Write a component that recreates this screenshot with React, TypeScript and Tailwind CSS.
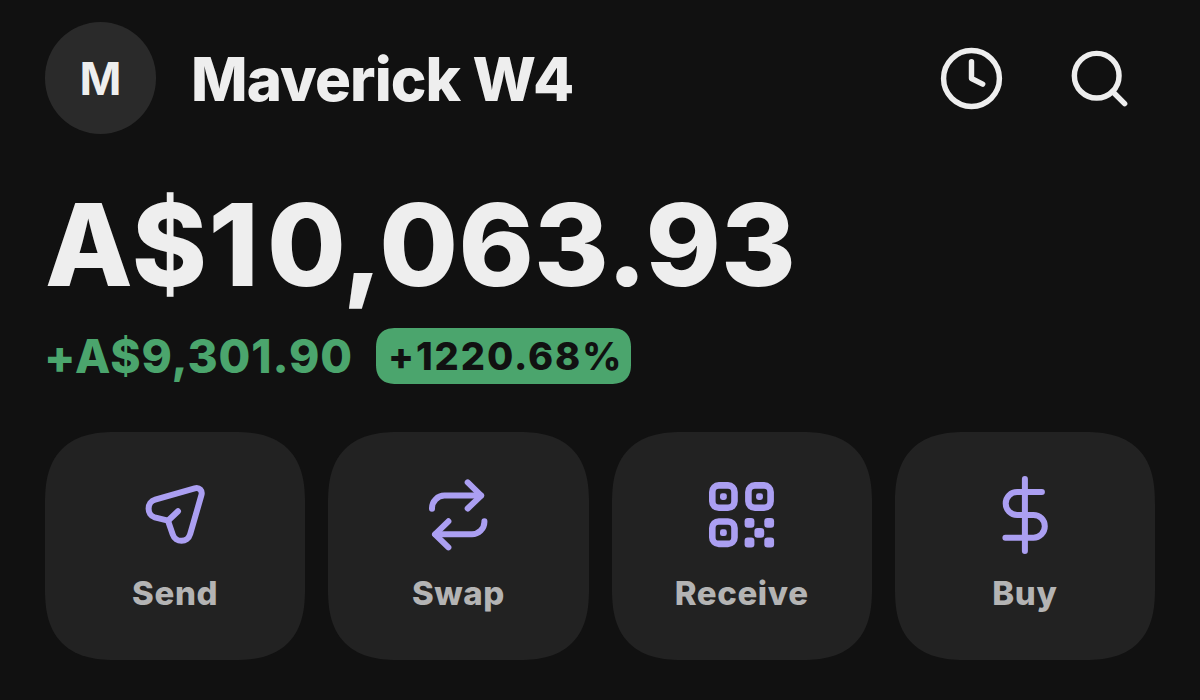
import React from 'react';
import { Clock, Search } from 'lucide-react';

const SendIcon: React.FC = () => (
  <svg viewBox="-4.7 -5 100 100" className="w-[100px] h-[100px]" fill="none" stroke="currentColor" strokeWidth="6" strokeLinecap="round" strokeLinejoin="round">
    <path d="M38.3 50.7L25 47.3C16.8 45 16.8 32 25.5 29.6L65 18.3C69.8 17 73 20.8 71.7 25.2L60.5 64C58 73 45.8 73 43 64.3Z" />
    <path d="M38.3 50.7L48.3 41.2" />
  </svg>
);

const SwapIcon: React.FC = () => (
  <svg viewBox="-1.4 0 100 100" className="w-[100px] h-[100px]" fill="none" stroke="currentColor" strokeWidth="6" strokeLinecap="round" strokeLinejoin="round">
    <path d="M22.6 43.7V43A12.5 12.5 0 0 1 35 30.6H71.5" />
    <path d="M58.3 17.4L71.8 30.6L58.3 43.5" />
    <path d="M75 56.3V57A12.5 12.5 0 0 1 62.5 69.3H26" />
    <path d="M39 56.3L25.6 69.3L39 82.3" />
  </svg>
);

const QrIcon: React.FC = () => (
  <svg viewBox="2 0 100 100" className="w-[100px] h-[100px]" fill="currentColor">
    <g fill="none" stroke="currentColor" strokeWidth="6.6">
      <rect x="22.3" y="20.4" width="22.2" height="22.4" rx="6.5" />
      <rect x="58.4" y="20.4" width="22.2" height="22.4" rx="6.5" />
      <rect x="22.3" y="56.5" width="22.2" height="22.4" rx="6.5" />
    </g>
    <rect x="30" y="28.2" width="6.8" height="6.8" rx="2.4" />
    <rect x="66.1" y="28.2" width="6.8" height="6.8" rx="2.4" />
    <rect x="30" y="64.3" width="6.8" height="6.8" rx="2.4" />
    <rect x="54.6" y="53" width="9.8" height="9.8" rx="3.2" />
    <rect x="74.3" y="53" width="9.8" height="9.8" rx="3.2" />
    <rect x="64.4" y="62.9" width="9.8" height="9.8" rx="3.2" />
    <rect x="54.6" y="72.6" width="9.8" height="9.8" rx="3.2" />
    <rect x="74.3" y="72.6" width="9.8" height="9.8" rx="3.2" />
  </svg>
);

const DollarIcon: React.FC = () => (
  <svg viewBox="-4.9 0 100 100" className="w-[100px] h-[100px]" fill="none" stroke="currentColor" strokeWidth="6" strokeLinecap="round" strokeLinejoin="round">
    <path d="M45 14V86" />
    <path d="M62 27.1H37.2A11.4 11.4 0 0 0 37.2 49.9H53.5A11.4 11.4 0 0 1 53.5 72.7H25.5" />
  </svg>
);

const actions = [
  { label: 'Send', icon: SendIcon },
  { label: 'Swap', icon: SwapIcon },
  { label: 'Receive', icon: QrIcon },
  { label: 'Buy', icon: DollarIcon }
];

const App: React.FC = () => {
  return (
    <div className="w-[1200px] h-[700px] overflow-hidden bg-[#111111] px-[45px] pt-[22px] font-['Inter',sans-serif] font-extrabold text-[#eeeeee]">
      {/* Account header */}
      <header className="flex items-center justify-between h-28">
        <div className="flex items-center gap-[35px]">
          <div className="w-[111px] h-28 rounded-full bg-[#2a2a2a] flex items-center justify-center text-[45px] leading-none font-bold">
            M
          </div>
          <h1 className="text-[60px] leading-[72px] tracking-[-0.9px] pt-px">Maverick W4</h1>
        </div>
        <div className="flex items-center gap-[61px] pr-[22px]">
          <button><Clock size={67} strokeWidth={1.95} /></button>
          <button><Search size={67} strokeWidth={1.95} /></button>
        </div>
      </header>

      {/* Balance */}
      <div className="mt-[42px] h-[138px] text-[114px] leading-[138px] whitespace-nowrap">
        <span className="tracking-[1.5px]">A$</span>
        <span className="tracking-[8px]">1</span>
        <span className="tracking-[0.2px]">0,063.93</span>
      </div>
      <div className="mt-[14px] flex items-center h-14">
        <span className="w-[331px] -ml-px text-[46px] leading-[58px] tracking-[0.9px] text-[#4ba56d]">+A$9,301.90</span>
        <span className="ml-px w-[255px] h-14 pl-3 rounded-[20px] [corner-shape:superellipse(1.3)] bg-[#4ba56d] text-[#111111] text-[38px] leading-[57px] tracking-[1.9px]">+1220.68%</span>
      </div>

      {/* Quick actions */}
      <div className="mt-12 grid grid-cols-4 gap-[23px]">
        {actions.map(({ label, icon: Icon }) => (
          <button
            key={label}
            className="h-[228px] pt-[33px] rounded-[72px] [corner-shape:superellipse(1.36)] bg-[#222222] flex flex-col items-center text-[#ab9ff2]"
          >
            <Icon />
            <span className="mt-2 text-[33px] leading-10 tracking-[0.6px] text-[#b4b4b4]">{label}</span>
          </button>
        ))}
      </div>
    </div>
  );
};

export default App;
